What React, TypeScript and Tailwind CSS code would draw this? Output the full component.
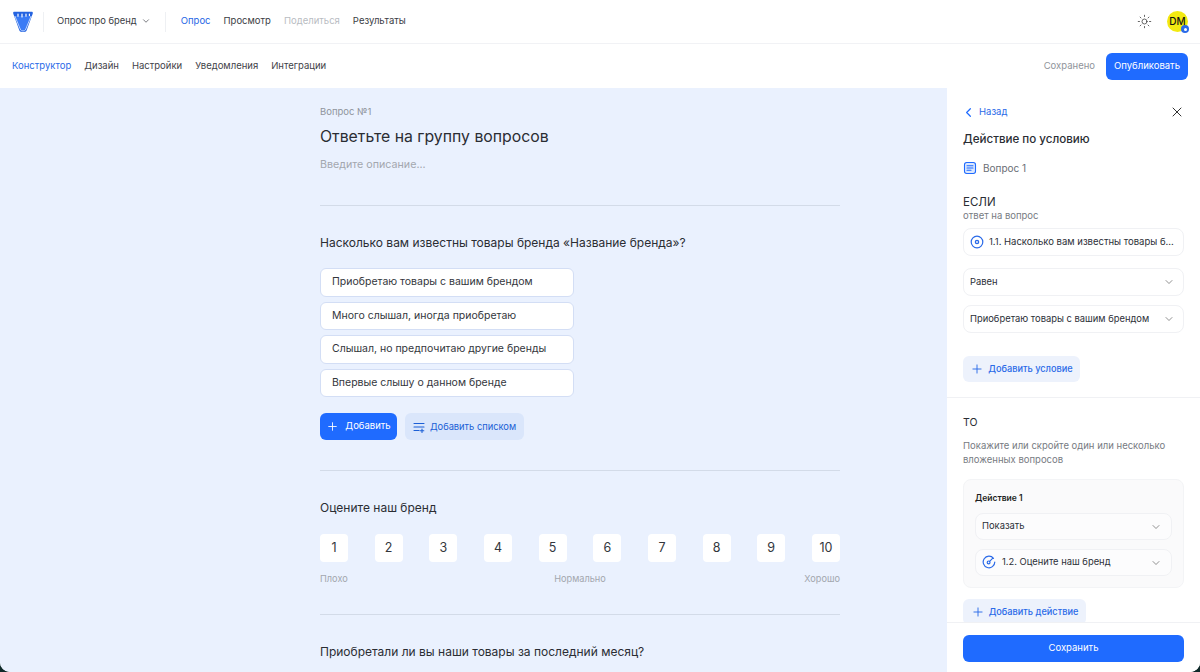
import React from 'react';
import { ChevronDown, ChevronLeft, Plus, Sun, X } from 'lucide-react';

const font = { fontFamily: 'Inter, "Noto Sans", sans-serif' };

const Logo = () => (
  <svg width="22" height="22" viewBox="0 0 22 22" fill="none">
    <path d="M1.2 2.4 C1 1.2 1.6 0.8 2.6 0.8 L19.4 0.8 C20.4 0.8 21 1.2 20.8 2.4 L14.6 19.4 C13.8 21.6 8.2 21.6 7.4 19.4 Z" fill="#2463e0" />
    <path d="M2.8 5 L8.6 19 C9.2 20.3 12.8 20.3 13.4 19 L19.2 5" stroke="#cfe0fd" strokeWidth="0.9" fill="#3a7bf5" />
    <path d="M6 3 L6 5.2 M10 3 L10 6 M14 3 L14 5.2 M17.4 3 L17.4 4.6" stroke="#ffffff" strokeWidth="1.2" strokeLinecap="round" />
  </svg>
);

const ListPlusIcon = () => (
  <svg width="12" height="12" viewBox="0 0 12 12" fill="none" stroke="#1b5fd6" strokeWidth="1.1" strokeLinecap="round">
    <path d="M1 2.5h10M1 6h10M1 9.5h5M9 8v3.5M7.2 9.8h3.6" />
  </svg>
);

const QuestionIcon = () => (
  <svg width="14" height="14" viewBox="0 0 14 14" fill="none" stroke="#1f6bff" strokeWidth="1.1" strokeLinecap="round">
    <rect x="1.5" y="1.5" width="11" height="11" rx="2.2" fill="#dbe7fd" />
    <path d="M4 4.8h6M4 7h6M4 9.2h4" />
  </svg>
);

const RadioIcon = () => (
  <svg width="14" height="14" viewBox="0 0 14 14" fill="none" stroke="#2a6ae8" strokeWidth="1.2">
    <circle cx="7" cy="7" r="5.8" />
    <circle cx="7" cy="7" r="1.6" strokeWidth="1.4" />
  </svg>
);

const GaugeIcon = () => (
  <svg width="14" height="14" viewBox="0 0 14 14" fill="none" stroke="#2a6ae8" strokeWidth="1.2" strokeLinecap="round">
    <path d="M11.5 3.3 A5.8 5.8 0 1 0 12.8 7" />
    <circle cx="6.6" cy="7.4" r="1.4" />
    <path d="M7.6 6.4 L10.6 3.4" />
  </svg>
);

const Select = ({ children, inner }: { children: React.ReactNode; inner?: boolean }) => (
  <div className={`flex items-center justify-between rounded-lg border border-[#f0f1f4] text-[9.4px] whitespace-nowrap text-[#2c3038] ${inner ? 'h-[27px] bg-[#fcfcfd] pl-[6px] pr-[9px]' : 'h-[28px] bg-white pl-[6px] pr-[8px]'}`}>
    <div className="flex items-center gap-[6px]">{children}</div>
    <ChevronDown size={12} strokeWidth={1.3} className="text-[#555]" />
  </div>
);

const answers = [
  'Приобретаю товары с вашим брендом',
  'Много слышал, иногда приобретаю',
  'Слышал, но предпочитаю другие бренды',
  'Впервые слышу о данном бренде',
];

const App: React.FC = () => {
  return (
    <div className="h-[672px] w-[1200px] overflow-hidden bg-[#0f2a2a]" style={font}>
      <div className="flex h-full flex-col overflow-hidden rounded-b-[10px] bg-white">
        {/* top bar */}
        <div className="flex h-[44px] shrink-0 items-center border-b border-[#f1f2f5] pl-[12px] pr-[12px]">
          <Logo />
          <div className="ml-[9px] h-[20px] w-px bg-[#eef0f3]" />
          <div className="ml-[13px] flex items-center gap-[4px] text-[9.4px] text-[#3a3d44]">
            Опрос про бренд
            <ChevronDown size={10} strokeWidth={1.6} />
          </div>
          <div className="ml-[14px] h-[20px] w-px bg-[#eef0f3]" />
          <div className="ml-[15px] flex items-center gap-[13px] text-[9.5px] text-[#3a3d44]">
            <span className="text-[#1f66e5]">Опрос</span>
            <span>Просмотр</span>
            <span className="text-[#b9bcc2]">Поделиться</span>
            <span>Результаты</span>
          </div>
          <div className="ml-auto flex items-center gap-[15px]">
            <Sun size={15} strokeWidth={1.1} className="text-[#222]" />
            <div className="relative flex h-[21px] w-[21px] items-center justify-center rounded-full bg-[#f2ea12] text-[10px] font-medium text-[#111]">
              DM
              <div className="absolute bottom-[-1px] right-[-1px] flex h-[8px] w-[8px] items-center justify-center rounded-full bg-[#2a6ae8]">
                <div className="h-[3px] w-[3px] rounded-full bg-white" />
              </div>
            </div>
          </div>
        </div>

        {/* sub bar */}
        <div className="flex h-[44px] shrink-0 items-center justify-between pl-[12px] pr-[12px]">
          <div className="flex items-center gap-[13px] text-[9.5px] text-[#3f4249]">
            <span className="text-[#2a6ae8]">Конструктор</span>
            <span>Дизайн</span>
            <span>Настройки</span>
            <span>Уведомления</span>
            <span>Интеграции</span>
          </div>
          <div className="flex items-center gap-[11px] text-[9.5px]">
            <span className="text-[#90949b]">Сохранено</span>
            <button className="h-[27px] w-[82px] rounded-md bg-[#1f6bff] text-white">Опубликовать</button>
          </div>
        </div>

        <div className="flex min-h-0 flex-1">
          {/* form */}
          <div className="min-w-0 flex-1 overflow-hidden bg-[#eaf1fe] pl-[320px]">
            <div className="w-[520px]">
              <div className="pt-[17px] text-[9.5px] leading-[14px] text-[#8f949c]">Вопрос №1</div>
              <div className="mt-[7px] text-[15.8px] leading-[22px] text-[#2a2d33]">Ответьте на группу вопросов</div>
              <div className="mt-[9px] text-[10.7px] leading-[16px] text-[#a3a7ae]">Введите описание...</div>
              <div className="mt-[32px] h-px bg-[#d3dbe8]" />

              <div className="mt-[28px] text-[12px] leading-[18px] text-[#2a2d33]">Насколько вам известны товары бренда «Название бренда»?</div>
              <div className="mt-[16px] flex w-[254px] flex-col gap-[5px]">
                {answers.map(a => (
                  <div key={a} className="flex h-[28.5px] items-center rounded-md border border-[#d3def5] bg-white pl-[11px] text-[10.5px] text-[#33363c]">{a}</div>
                ))}
              </div>
              <div className="mt-[16px] flex gap-[8px]">
                <button className="flex h-[27px] w-[77px] items-center justify-center gap-[6px] rounded-md bg-[#1f6bff] text-[9.5px] text-white">
                  <Plus size={13} strokeWidth={1.6} />
                  Добавить
                </button>
                <button className="flex h-[27px] w-[119px] items-center justify-center gap-[5px] rounded-md bg-[#dae6fb] text-[9.3px] text-[#1b5fd6]">
                  <ListPlusIcon />
                  Добавить списком
                </button>
              </div>
              <div className="mt-[30px] h-px bg-[#d3dbe8]" />

              <div className="mt-[28px] text-[12px] leading-[18px] text-[#2a2d33]">Оцените наш бренд</div>
              <div className="mt-[17px] flex justify-between">
                {[1, 2, 3, 4, 5, 6, 7, 8, 9, 10].map(n => (
                  <div key={n} className="flex h-[28px] w-[28px] items-center justify-center rounded-[4px] bg-white text-[12.5px] text-[#33363c]">{n}</div>
                ))}
              </div>
              <div className="mt-[10px] grid grid-cols-3 text-[9.2px] leading-[14px] text-[#a3a7ae]">
                <span>Плохо</span>
                <span className="text-center">Нормально</span>
                <span className="text-right">Хорошо</span>
              </div>
              <div className="mt-[28px] h-px bg-[#d3dbe8]" />
              <div className="mt-[28px] text-[12px] leading-[18px] text-[#2a2d33]">Приобретали ли вы наши товары за последний месяц?</div>
            </div>
          </div>

          {/* side panel */}
          <div className="relative flex w-[253px] shrink-0 flex-col overflow-hidden bg-white">
            <div className="min-h-0 flex-1 overflow-hidden">
              <div className="px-[16px]">
                <div className="flex items-center justify-between pt-[16px]">
                  <div className="flex items-center gap-[3px] text-[9.5px] leading-[14px] text-[#2a6ae8]">
                    <ChevronLeft size={15} strokeWidth={1.9} className="ml-[-2px] text-[#1f6bff]" />
                    Назад
                  </div>
                  <X size={16} strokeWidth={1.4} className="mr-[-1px] text-[#222]" />
                </div>
                <div className="mt-[10px] text-[11.6px] leading-[18px] font-medium text-[#2a2d33]">Действие по условию</div>
                <div className="mt-[12px] flex items-center gap-[6px] text-[10px] leading-[16px] text-[#6a6e75]">
                  <QuestionIcon />
                  Вопрос 1
                </div>
                <div className="mt-[19px] text-[11.5px] leading-[14px] text-[#2a2d33]">ЕСЛИ</div>
                <div className="text-[9.5px] leading-[14px] text-[#777b82]">ответ на вопрос</div>
                <div className="mt-[5px] flex h-[28px] items-center gap-[5px] rounded-lg border border-[#f0f1f4] pl-[6px] text-[9.5px] whitespace-nowrap text-[#2c3038]">
                  <RadioIcon />
                  1.1. Насколько вам известны товары б...
                </div>
                <div className="mt-[12px]">
                  <Select>Равен</Select>
                </div>
                <div className="mt-[9px]">
                  <Select>Приобретаю товары с вашим брендом</Select>
                </div>
                <button className="mt-[23px] flex h-[26px] w-[117px] items-center justify-center gap-[4px] rounded-md bg-[#edf2fc] text-[9.2px] font-medium text-[#2a6ae8]">
                  <Plus size={14} strokeWidth={1.6} />
                  Добавить условие
                </button>
              </div>
              <div className="mt-[15px] h-px bg-[#f0f1f4]" />
              <div className="px-[16px]">
                <div className="mt-[18px] text-[10.5px] leading-[14px] text-[#2a2d33]">ТО</div>
                <div className="mt-[9px] text-[9.5px] leading-[14px] text-[#777b82]">Покажите или скройте один или несколько вложенных вопросов</div>
                <div className="mt-[12px] rounded-lg border border-[#f3f4f6] bg-[#fafafb] px-[11px] pb-[11px] pt-[11px]">
                  <div className="text-[8.5px] font-semibold leading-[14px] text-[#1c1e22]">Действие 1</div>
                  <div className="mt-[8px] flex flex-col gap-[9px]">
                    <Select inner>Показать</Select>
                    <Select inner>
                      <GaugeIcon />
                      1.2. Оцените наш бренд
                    </Select>
                  </div>
                </div>
                <button className="mt-[11px] flex h-[26px] w-[123px] items-center justify-center gap-[4px] rounded-md bg-[#edf2fc] text-[9.2px] font-medium text-[#2a6ae8]">
                  <Plus size={14} strokeWidth={1.6} />
                  Добавить действие
                </button>
              </div>
            </div>
            <div className="absolute bottom-0 left-0 right-0 h-[50px] border-t border-[#f0f1f4] bg-white px-[16px] pt-[10px]">
              <button className="h-[27px] w-full rounded-md bg-[#1f6bff] text-[9.5px] text-white">Сохранить</button>
            </div>
          </div>
        </div>
      </div>
    </div>
  );
};

export default App;
